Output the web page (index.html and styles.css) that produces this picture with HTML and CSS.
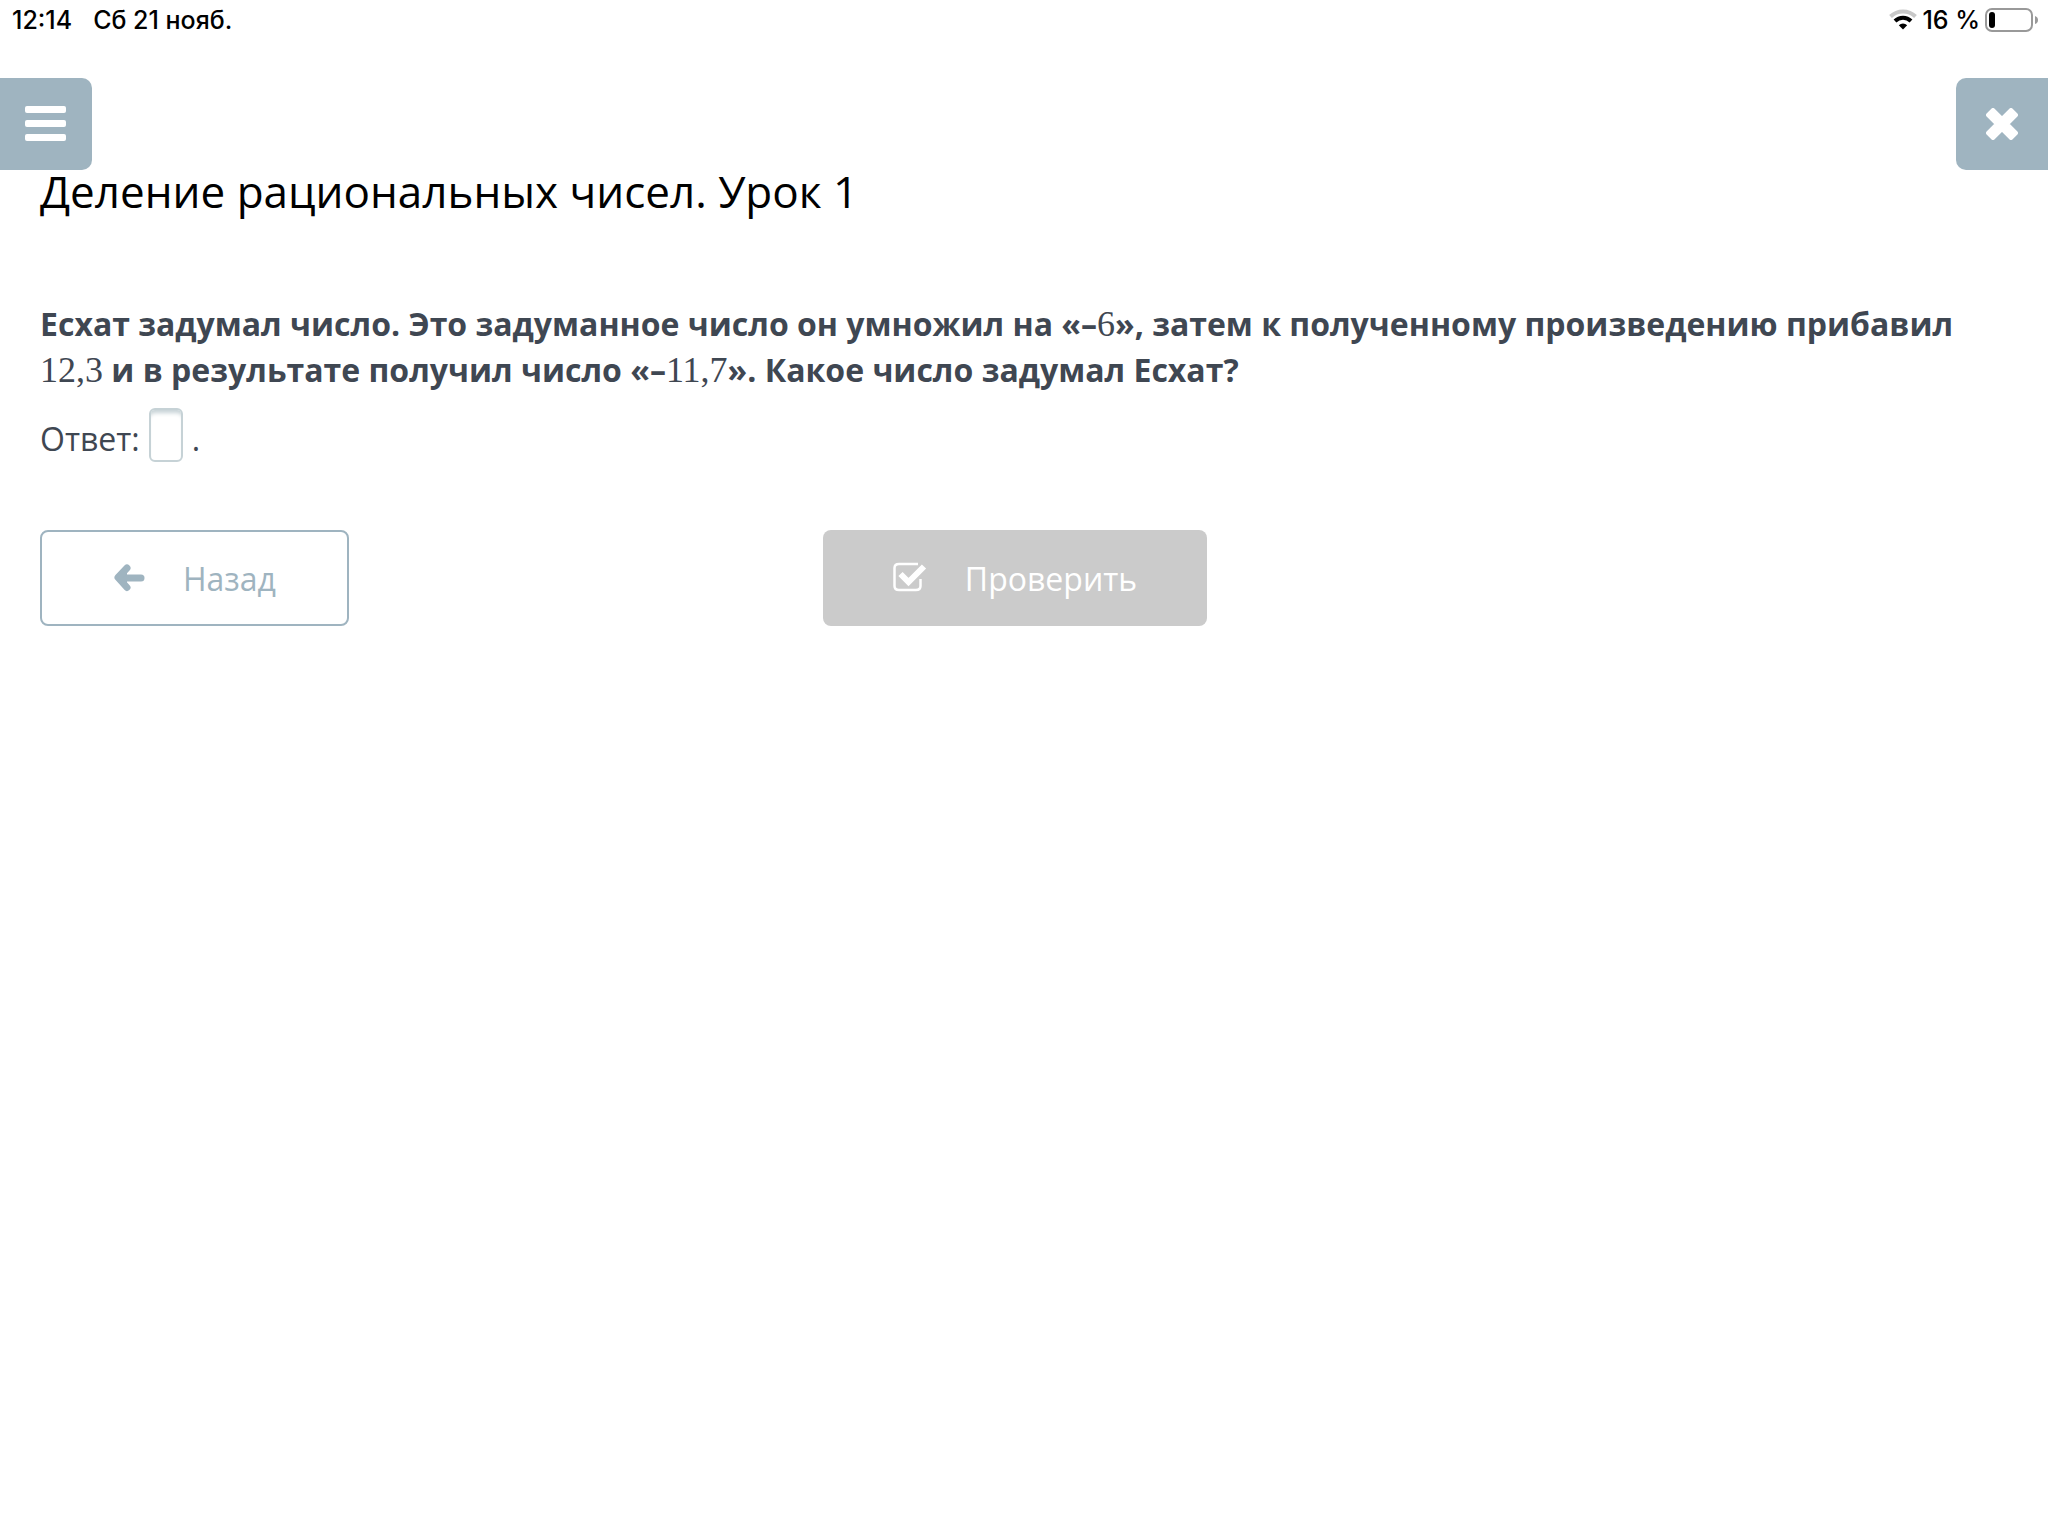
FILE: index.html
```html
<!DOCTYPE html>
<html lang="ru">
<head>
    <meta charset="UTF-8">
    <meta name="viewport" content="width=device-width, initial-scale=1.0">
    <title>Деление рациональных чисел. Урок 1</title>
    <link rel="stylesheet" href="styles.css">
</head>
<body>

<div class="status-bar">
    <div class="status-group">
        <span>12:14</span>
        <span>Сб 21 нояб.</span>
    </div>
    <div class="status-right">
        <svg class="wifi" width="28" height="22" viewBox="0 0 28 22" fill="none" stroke-width="4">
            <path d="M1.5 7.500 A18 18 0 0 1 26.500 7.500" stroke="#c8c8c8"/>
            <path d="M6 12 A11.500 11.500 0 0 1 22 12" stroke="#000"/>
            <path d="M14 20.500 L9.800 16.200 A6 6 0 0 1 18.200 16.200 Z" fill="#000"/>
        </svg>
        <span>16 %</span>
        <svg class="battery" width="54" height="24" viewBox="0 0 54 24">
            <rect x="1" y="1" width="46" height="22" rx="6" fill="none" stroke="#999" stroke-width="2"/>
            <rect x="4" y="4" width="6" height="16" rx="3" fill="#000"/>
            <path d="M50 8 Q53 9 53 12 Q53 15 50 16 Z" fill="#999"/>
        </svg>
    </div>
</div>

<nav class="toolbar">
    <button class="tool menu" aria-label="Меню">
        <svg width="42" height="36" viewBox="0 0 42 36" fill="#fff">
            <rect width="41" height="7" rx="2"/>
            <rect y="14" width="41" height="7" rx="2"/>
            <rect y="28" width="41" height="7" rx="2"/>
        </svg>
    </button>
    <button class="tool close" aria-label="Закрыть">
        <svg width="32" height="32" viewBox="0 0 32 32" stroke="#fff" fill="#fff" stroke-width="4" stroke-linejoin="round">
            <path d="M7 2 L16 11 L25 2 L30 7 L21 16 L30 25 L25 30 L16 21 L7 30 L2 25 L11 16 L2 7 Z"/>
        </svg>
    </button>
</nav>

<main class="lesson">
    <h1>Деление рациональных чисел. Урок 1</h1>

    <p class="question">Есхат задумал число. Это задуманное число он умножил на «–<span class="math">6</span>», затем к полученному произведению прибавил <span class="math">12,3</span> и в результате получил число «–<span class="math">11,7</span>». Какое число задумал Есхат?</p>

    <div class="answer">
        <label for="answer">Ответ:</label>
        <input type="text" id="answer">
        <span>.</span>
    </div>

    <div class="actions">
        <button class="btn back">
            <svg width="32" height="28" viewBox="0 0 32 28" fill="none" stroke="currentColor" stroke-width="7" stroke-linecap="round" stroke-linejoin="round">
                <path d="M28 14 H12"/>
                <path d="M14 4 L4 14 L14 24 Z" fill="currentColor" stroke="none"/>
                <path d="M14 4 L5 13.500 L14 23.500"/>
            </svg>
            Назад
        </button>
        <button class="btn check" disabled>
            <svg width="34" height="32" viewBox="0 0 34 32" fill="none" stroke="currentColor">
                <path d="M25 2 H6 Q1.500 2 1.500 6 V24 Q1.500 28 6 28 H23 Q27.500 28 27.500 24 V17" stroke-width="2.500"/>
                <path d="M7.500 12 L15.500 20 L31 4.500" stroke-width="6"/>
            </svg>
            Проверить
        </button>
        <div class="next-slot"></div>
    </div>
</main>

</body>
</html>
```
FILE: styles.css
```css
* {
    box-sizing: border-box;
}
body {
    margin: 0;
    background: #fff;
    color: #3f4752;
    font-family: "Open Sans", "Noto Sans", sans-serif;
    font-size: 32px;
    line-height: 46px;
}
button {
    border: none;
    font-family: inherit;
    cursor: pointer;
}
.status-bar {
    display: flex;
    justify-content: space-between;
    align-items: center;
    height: 40px;
    padding: 0 9px 0 12px;
    color: #000;
    font-family: Inter, sans-serif;
    font-size: 25px;
    font-weight: 500;
    line-height: 40px;
}
.status-group {
    display: flex;
    gap: 21px;
}
.status-right {
    display: flex;
    align-items: center;
    gap: 5px;
}
.toolbar {
    display: flex;
    justify-content: space-between;
    margin-top: 38px;
}
.tool {
    display: flex;
    align-items: center;
    width: 92px;
    height: 92px;
    padding: 0 25px;
    background: #9fb4c0;
}
.menu {
    border-radius: 0 10px 10px 0;
}
.close {
    padding: 0 30px;
    border-radius: 10px 0 0 10px;
}
.lesson {
    padding: 0 40px;
}
h1 {
    margin: 0 0 89px;
    color: #000;
    font-size: 44px;
    font-weight: 400;
    line-height: 42px;
}
.question {
    margin: 0;
    font-weight: 700;
}
.math {
    font-family: "Liberation Serif", serif;
    font-size: 36px;
    font-weight: 400;
    line-height: 1;
}
.answer {
    display: flex;
    align-items: flex-end;
    gap: 9px;
    margin-top: 15px;
}
.answer input {
    width: 34px;
    height: 54px;
    padding: 0;
    border: 2px solid #c6d2d6;
    border-radius: 6px;
    box-shadow: inset 0 6px 4px -3px #c6d2d6;
    font: inherit;
}
.actions {
    display: flex;
    justify-content: space-between;
    margin-top: 68px;
}
.btn {
    display: flex;
    justify-content: center;
    align-items: center;
    gap: 38px;
    height: 96px;
    border-radius: 8px;
    font-size: 32px;
    font-weight: 400;
}
.back {
    width: 309px;
    border: 2px solid #9fb4c0;
    background: #fff;
    color: #9fb4c0;
}
.check {
    width: 384px;
    background: #cbcbcb;
    color: #fff;
}
.next-slot {
    width: 327px;
}
```
